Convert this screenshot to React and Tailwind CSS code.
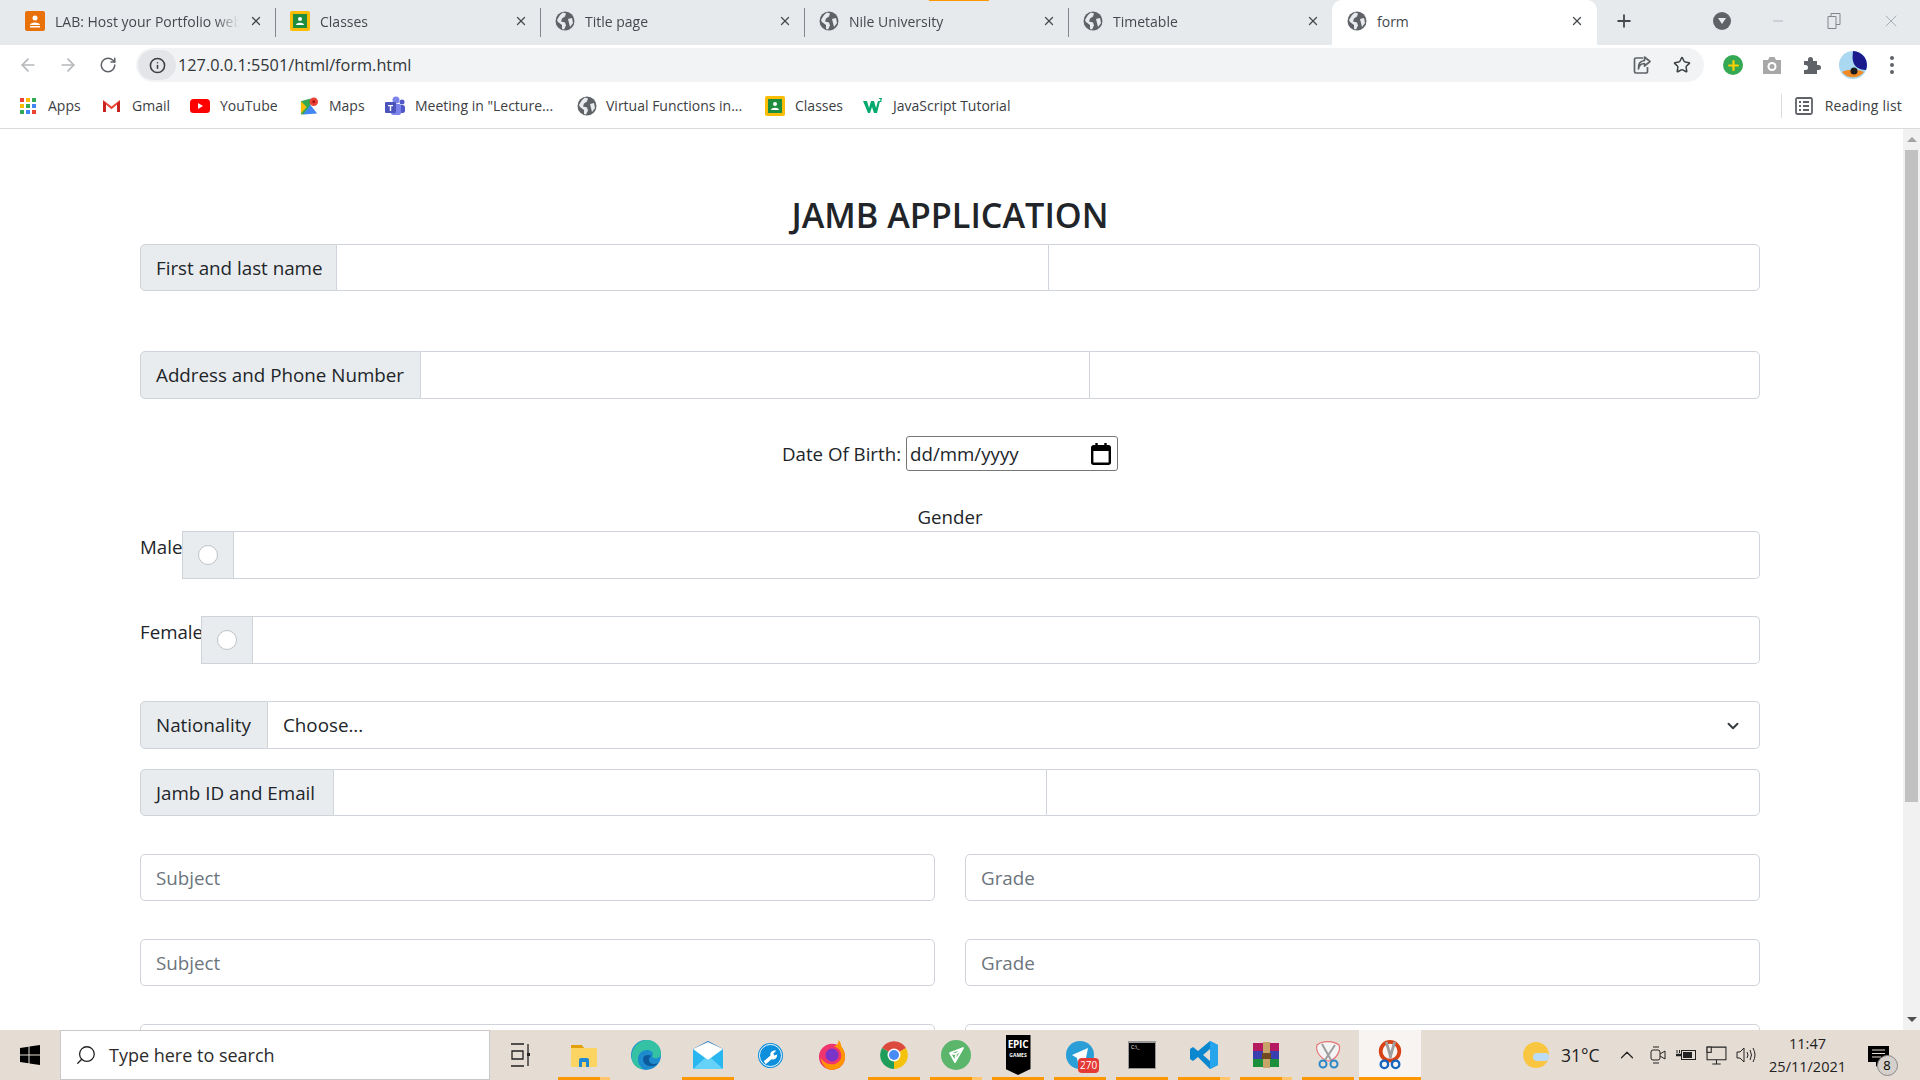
import { ArrowLeft, ArrowRight, RotateCw, Info, Star, Plus, X, Minus, ChevronDown, ChevronUp, Search } from 'lucide-react';

const Globe = () => (
  <svg viewBox="0 0 20 20" className="w-[20px] h-[20px] shrink-0">
    <circle cx="10" cy="10" r="9.5" fill="#5f6368" />
    <path d="M8 1.500l3 1-1 3-3 2-1 3 4 1 1 3-2 4-2-.5 0-4-4-3-1-2 3-5zM13 8l4-1 1 5-3 4-1-4z" fill="#e8eaed" />
  </svg>
);

const Classroom = () => (
  <svg viewBox="0 0 20 20" className="w-[20px] h-[20px] shrink-0">
    <rect width="20" height="20" rx="2" fill="#fbbc04" />
    <rect x="3" y="3" width="14" height="14" fill="#1e8e3e" />
    <circle cx="10" cy="8" r="2" fill="#fff" />
    <path d="M6 14c0-3 8-3 8 0z" fill="#fff" />
  </svg>
);

const LabIcon = () => (
  <svg viewBox="0 0 20 20" className="w-[20px] h-[20px] shrink-0">
    <rect width="20" height="20" rx="2" fill="#e8710a" />
    <circle cx="10" cy="7" r="2.5" fill="#fff" />
    <path d="M5 14c0-3.5 10-3.5 10 0z" fill="#fff" />
    <rect x="5" y="15" width="10" height="1.5" fill="#fff" />
  </svg>
);

const tabs = [
  { title: 'LAB: Host your Portfolio web', icon: <LabIcon />, w: 'w-[264px] pl-[13px] border-r' },
  { title: 'Classes', icon: <Classroom />, w: 'w-[265px] pl-[14px] border-r' },
  { title: 'Title page', icon: <Globe />, w: 'w-[264px] pl-[14px] border-r' },
  { title: 'Nile University', icon: <Globe />, w: 'w-[264px] pl-[14px] border-r' },
  { title: 'Timetable', icon: <Globe />, w: 'w-[263px] pl-[14px]' },
];

const AppsIcon = () => (
  <svg viewBox="0 0 16 16" className="w-[16px] h-[16px]">
    {[0, 6, 12].map((x, i) => [0, 6, 12].map((y, j) => (
      <rect key={`${i}${j}`} x={x} y={y} width="4" height="4" fill={['#ea4335', '#fbbc04', '#34a853', '#4285f4'][(i + j) % 4]} />
    )))}
  </svg>
);

const GmailIcon = () => (
  <svg viewBox="0 0 20 16" className="w-[19px] h-[15px]">
    <path d="M1 15V2l9 7 9-7v13h-3V7l-6 5-6-5v8z" fill="#ea4335" />
    <path d="M1 15V3l3 3v9z" fill="#c5221f" />
    <path d="M19 15V3l-3 3v9z" fill="#c5221f" />
  </svg>
);

const YoutubeIcon = () => (
  <svg viewBox="0 0 20 14" className="w-[20px] h-[14px]">
    <rect width="20" height="14" rx="3.5" fill="#f00" />
    <path d="M8 4l5 3-5 3z" fill="#fff" />
  </svg>
);

const MapsIcon = () => (
  <svg viewBox="0 0 20 20" className="w-[19px] h-[20px]">
    <path d="M1 5l10-3v16L1 19z" fill="#34a853" />
    <path d="M3 19L11 9l7 9z" fill="#4285f4" />
    <path d="M1 5l6 6-6 7z" fill="#fbbc04" />
    <circle cx="14.5" cy="5.5" r="4.5" fill="#ea4335" />
    <circle cx="14.5" cy="5.5" r="1.5" fill="#a50e0e" />
  </svg>
);

const TeamsIcon = () => (
  <svg viewBox="0 0 20 20" className="w-[20px] h-[20px]">
    <circle cx="11" cy="4" r="3.5" fill="#7b83eb" />
    <circle cx="17" cy="6" r="2.5" fill="#5059c9" />
    <rect x="13" y="9" width="7" height="8" rx="2.5" fill="#5059c9" />
    <rect x="6" y="8" width="10" height="11" rx="2" fill="#7b83eb" />
    <rect x="0" y="6" width="11" height="11" rx="1" fill="#4b53bc" />
    <path d="M3 9h5v1.3H6.2V15H4.8v-4.7H3z" fill="#fff" />
  </svg>
);

const W3Icon = () => (
  <svg viewBox="0 0 20 16" className="w-[20px] h-[16px]">
    <path d="M0 3h4l2 7 2-7h3l2 7 2-7h2l-3 12h-3l-2-6-2 6H5z" fill="#04aa6d" />
    <path d="M16 0h3v1l-1 1c1 0 1 2-.5 2H16v-1h1.500v-.7H17v-.6l.7-.7H16z" fill="#04aa6d" />
  </svg>
);

const bookmarks = [
  { label: 'Apps', icon: <AppsIcon />, w: 'w-[82px]', gap: 'gap-[12px]' },
  { label: 'Gmail', icon: <GmailIcon />, w: 'w-[88px]', gap: 'gap-[11px]' },
  { label: 'YouTube', icon: <YoutubeIcon />, w: 'w-[110px]', gap: 'gap-[10px]' },
  { label: 'Maps', icon: <MapsIcon />, w: 'w-[85px]', gap: 'gap-[10px]' },
  { label: 'Meeting in "Lecture...', icon: <TeamsIcon />, w: 'w-[192px]', gap: 'gap-[10px]' },
  { label: 'Virtual Functions in...', icon: <Globe />, w: 'w-[188px]', gap: 'gap-[9px]' },
  { label: 'Classes', icon: <Classroom />, w: 'w-[98px]', gap: 'gap-[10px]' },
  { label: 'JavaScript Tutorial', icon: <W3Icon />, w: 'w-[160px]', gap: 'gap-[10px]' },
];

function Tabs() {
  return (
    <div className="relative h-[45px] bg-[#e7eaed] flex items-end pl-[12px] shrink-0">
      <div className="absolute top-0 left-[929px] w-[60px] h-[1px] bg-[#ff9800]" />
      {tabs.map((t) => (
        <div key={t.title} className={`${t.w} h-[45px] pb-[3px] flex items-center gap-[10px] pr-[12px] border-[#9aa0a6] [border-image:linear-gradient(transparent_20%,#80868b_20%,#80868b_80%,transparent_80%)_1] text-[#45494d]`}>
          {t.icon}
          <span className="flex-1 text-[14px] whitespace-nowrap overflow-hidden [mask-image:linear-gradient(to_left,transparent,black_24px)]">{t.title}</span>
          <X className="w-[14px] h-[14px] shrink-0" strokeWidth={2.2} />
        </div>
      ))}
      <div className="w-[265px] h-[45px] pb-[3px] bg-white rounded-t-[10px] flex items-center gap-[10px] pl-[15px] pr-[13px] text-[#45494d]">
        <Globe />
        <span className="flex-1 text-[14px]">form</span>
        <X className="w-[14px] h-[14px]" strokeWidth={2.2} />
      </div>
      <div className="flex-1 h-[45px] pb-[3px] flex items-center">
        <Plus className="ml-[17px] w-[20px] h-[20px] text-[#45494d]" strokeWidth={2.2} />
        <div className="ml-[79px] w-[18px] h-[18px] rounded-full bg-[#5f6368] flex items-center justify-center">
          <div className="w-0 h-0 border-l-[4px] border-r-[4px] border-t-[6px] border-l-transparent border-r-transparent border-t-[#e8eaed]" />
        </div>
        <Minus className="ml-[39px] w-[16px] h-[16px] text-[#9aa0a6]" strokeWidth={1} />
        <svg viewBox="0 0 14 16" className="ml-[41px] w-[14px] h-[16px]" fill="none" stroke="#80868b" strokeWidth="1"><path d="M1 3.500h8v12H1zM4 3.500V.5h9v11h-4" /></svg>
        <X className="ml-[40px] w-[20px] h-[20px] text-[#9aa0a6]" strokeWidth={1} />
      </div>
    </div>
  );
}

function Toolbar() {
  return (
    <div className="h-[40px] bg-white flex items-center pl-[18px] shrink-0">
      <ArrowLeft className="w-[20px] h-[20px] text-[#b4b7bb]" strokeWidth={2} />
      <ArrowRight className="ml-[20px] w-[20px] h-[20px] text-[#b4b7bb]" strokeWidth={2} />
      <RotateCw className="ml-[21px] w-[18px] h-[18px] text-[#5f6368]" strokeWidth={2} />
      <div className="ml-[19px] w-[1568px] h-[34px] rounded-full bg-[#f1f3f4] flex items-center">
        <div className="ml-[2px] w-[38px] h-[30px] rounded-full bg-[#e3e5e8] flex items-center justify-center">
          <Info className="w-[17px] h-[17px] text-[#3c4043]" strokeWidth={2.2} />
        </div>
        <span className="ml-[2px] text-[16.3px] text-[#33363a]">127.0.0.1:5501/html/form.html</span>
        <svg viewBox="0 0 20 20" className="ml-auto w-[20px] h-[20px]" fill="none" stroke="#5f6368" strokeWidth="1.700">
          <path d="M11 3H4a1.500 1.500 0 0 0-1.500 1.500v12A1.500 1.500 0 0 0 4 18h10a1.500 1.500 0 0 0 1.500-1.500V12" />
          <path d="M12.500 2l5.500 4.500-5.500 4.500V8.500C9 8.500 7 10.500 6.500 14c-.5-5 2-8 6-8.500z" strokeLinejoin="round" />
        </svg>
        <Star className="ml-[21px] mr-[13px] w-[18px] h-[18px] text-[#3c4043]" strokeWidth={2} />
      </div>
      <div className="ml-[19px] w-[20px] h-[20px] rounded-full bg-[#34a853] flex items-center justify-center">
        <Plus className="w-[15px] h-[15px] text-[#fbd000]" strokeWidth={3.5} />
      </div>
      <svg viewBox="0 0 20 20" className="ml-[19px] w-[20px] h-[20px]">
        <path d="M1 5h5l1.500-3h5L14 5h5v14H1z" fill="#a8a8a8" />
        <circle cx="10" cy="11.500" r="4.500" fill="#fff" />
        <circle cx="10" cy="11.500" r="2.500" fill="#a8a8a8" />
      </svg>
      <svg viewBox="0 0 20 20" className="ml-[20px] w-[20px] h-[20px]">
        <path d="M2 6h4V4.500a2.500 2.500 0 0 1 5 0V6h4v4h1.500a2.500 2.500 0 0 1 0 5H15v4H2v-4h1.500a2.500 2.500 0 0 0 0-5H2z" fill="#5f6368" />
      </svg>
      <svg viewBox="0 0 28 28" className="ml-[17px] w-[28px] h-[28px] shrink-0">
        <circle cx="14" cy="14" r="14" fill="#a9d8f0" />
        <path d="M14 0a14 14 0 0 1 13 19c-6 0-12-3-13-9-1-4 0-7 0-10z" fill="#1a1a8c" />
        <path d="M3 21c5-3 16-3 22 0a14 14 0 0 1-22 0z" fill="#f08a24" />
        <circle cx="15" cy="20" r="3.500" fill="#1c1c1c" />
      </svg>
      <div className="ml-[23px] flex flex-col gap-[3px]">
        <div className="w-[4px] h-[4px] rounded-full bg-[#5f6368]" />
        <div className="w-[4px] h-[4px] rounded-full bg-[#5f6368]" />
        <div className="w-[4px] h-[4px] rounded-full bg-[#5f6368]" />
      </div>
    </div>
  );
}

function Bookmarks() {
  return (
    <div className="h-[44px] pb-[2px] bg-white flex items-center pl-[20px] border-b border-[#dadce0] shrink-0 text-[14px] text-[#3c4043]">
      {bookmarks.map((b) => (
        <div key={b.label} className={`${b.w} ${b.gap} flex items-center shrink-0 whitespace-nowrap`}>
          {b.icon}
          <span>{b.label}</span>
        </div>
      ))}
      <div className="ml-auto h-[24px] border-l border-[#dadce0] pl-[13px] pr-[18px] flex items-center gap-[12px]">
        <svg viewBox="0 0 18 18" className="w-[18px] h-[18px]" fill="none" stroke="#5f6368" strokeWidth="1.800">
          <rect x="1" y="1" width="16" height="16" rx="1.500" />
          <path d="M4 5h2M8 5h6M4 9h2M8 9h6M4 13h2M8 13h6" />
        </svg>
        <span className="tracking-[0.2px]">Reading list</span>
      </div>
    </div>
  );
}

const Field = ({ className = '' }) => (
  <input className={`min-w-0 flex-1 h-full bg-white border border-[#ced4da] outline-none ${className}`} />
);

function InputGroup({ label, labelW, split, className = '' }) {
  return (
    <div className={`flex ${className}`}>
      <div className={`${labelW} shrink-0 h-full flex items-center pl-[15px] pt-[1px] bg-[#e9ecef] border border-[#ced4da] rounded-l-[5px] text-[18.8px] text-[#212529]`}>{label}</div>
      <input className={`${split} shrink-0 h-full bg-white border-y border-[#ced4da] outline-none`} />
      <Field className="rounded-r-[5px]" />
    </div>
  );
}

function RadioRow({ label, labelW, className = '' }) {
  return (
    <div className={`flex h-[48px] ${className}`}>
      <span className={`${labelW} shrink-0 h-[32px] text-[18.7px] leading-[32px] text-[#212529]`}>{label}</span>
      <div className="w-[52px] shrink-0 h-full bg-[#e9ecef] border border-[#ced4da] flex items-center justify-center">
        <div className="w-[20px] h-[20px] rounded-full bg-white border border-[#bfc3c7]" />
      </div>
      <Field className="border-l-0 rounded-r-[5px]" />
    </div>
  );
}

function SubjectRow({ className = '' }) {
  return (
    <div className={`grid grid-cols-2 gap-[30px] ${className}`}>
      <input placeholder="Subject" className="h-[47px] px-[15px] bg-white border border-[#ced4da] rounded-[5px] text-[18.8px] outline-none placeholder:text-[#6c757d]" />
      <input placeholder="Grade" className="h-[47px] px-[15px] bg-white border border-[#ced4da] rounded-[5px] text-[18.8px] outline-none placeholder:text-[#6c757d]" />
    </div>
  );
}

function Form() {
  return (
    <div className="flex-1 min-w-0 pl-[140px] pr-[143px]">
      <h1 className="mt-[58px] h-[57px] leading-[55px] text-center text-[34.2px] font-semibold text-[#212529]">JAMB APPLICATION</h1>
      <InputGroup label="First and last name" labelW="w-[197px]" split="w-[711px]" className="h-[47px]" />
      <InputGroup label="Address and Phone Number" labelW="w-[281px]" split="w-[668px]" className="mt-[60px] h-[48px]" />
      <div className="mt-[37px] flex items-center justify-center h-[35px] text-[18.7px] text-[#212529]">
        <span className="pt-[2px]">Date Of Birth:</span>
        <div className="ml-[5px] w-[212px] h-[35px] flex items-center justify-between pl-[3px] pr-[6px] border border-[#767676] rounded-[3px] bg-white">
          <span className="pt-[2px]">dd/mm/yyyy</span>
          <svg viewBox="0 0 20 22" className="w-[20px] h-[22px]" fill="none" stroke="#000" strokeWidth="2.400">
            <rect x="1.200" y="3.200" width="17.600" height="17.600" rx="1.500" />
            <path d="M1.200 6h17.600" strokeWidth="4" />
            <path d="M5.500 0v3M14.500 0v3" />
          </svg>
        </div>
      </div>
      <div className="mt-[30px] h-[30px] leading-[31px] text-center text-[18.7px] text-[#212529]">Gender</div>
      <RadioRow label="Male" labelW="w-[42px]" />
      <RadioRow label="Female" labelW="w-[61px]" className="mt-[37px]" />
      <div className="mt-[37px] flex h-[48px]">
        <div className="w-[128px] shrink-0 flex items-center pl-[15px] pt-[1px] bg-[#e9ecef] border border-[#ced4da] rounded-l-[5px] text-[18.8px] text-[#212529]">Nationality</div>
        <div className="flex-1 flex items-center justify-between pl-[15px] pr-[17px] pt-[1px] border border-l-0 border-[#ced4da] rounded-r-[5px] text-[18.8px] text-[#212529]">
          <span>Choose...</span>
          <ChevronDown className="w-[18px] h-[18px] text-[#343a40]" strokeWidth={2.5} />
        </div>
      </div>
      <InputGroup label="Jamb ID and Email" labelW="w-[194px]" split="w-[712px]" className="mt-[20px] h-[47px]" />
      <SubjectRow className="mt-[38px]" />
      <SubjectRow className="mt-[38px]" />
      <SubjectRow className="mt-[38px]" />
    </div>
  );
}

function Scrollbar() {
  return (
    <div className="w-[17px] shrink-0 bg-[#f1f1f1] flex flex-col items-center">
      <div className="h-[21px] flex items-center justify-center">
        <div className="w-0 h-0 border-l-[5px] border-r-[5px] border-b-[5px] border-l-transparent border-r-transparent border-b-[#a3a3a3]" />
      </div>
      <div className="w-[13px] h-[652px] bg-[#c1c1c1]" />
      <div className="flex-1" />
      <div className="h-[21px] flex items-center justify-center">
        <div className="w-0 h-0 border-l-[5px] border-r-[5px] border-t-[5px] border-l-transparent border-r-transparent border-t-[#505050]" />
      </div>
    </div>
  );
}

const taskIcons = [
  { bar: 'part', icon: (
    <svg viewBox="0 0 28 28" className="w-[28px] h-[28px]"><path d="M1 4h11l2 3H1z" fill="#e3a008" /><rect x="1" y="7" width="26" height="19" rx="1" fill="#fcd462" /><path d="M9 26v-7q0-2 2-2h6q2 0 2 2v7h-3v-5h-4v5z" fill="#1e88d2" /></svg>
  ) },
  { bar: 'none', icon: (
    <svg viewBox="0 0 30 30" className="w-[30px] h-[30px]"><circle cx="15" cy="15" r="15" fill="#1d8ccf" /><path d="M1 13C3 4 10 0 16 0c8 0 14 6 14 13 0 6-8 7-9 3 2-1 1-6-5-6-5 0-9 4-9 9 0 3 1 7 5 10C5 29-1 22 1 13z" fill="#35c1a4" /><path d="M12 19c0 5 5 8 10 7 2 0 4-1 5-3-4 2-9 1-9-3 0-4 3-4 3-4-4-2-9-1-9 3z" fill="#0c5a9c" /></svg>
  ) },
  { bar: 'full', icon: (
    <svg viewBox="0 0 32 30" className="w-[32px] h-[30px]"><path d="M1 9L16 1l15 8v20H1z" fill="#0e6fb8" /><rect x="1" y="9" width="30" height="20" fill="#2ab6ee" /><path d="M1 9l15 11L31 9 16 2z" fill="#fff" /><path d="M1 29l12-11 3 2 3-2 12 11z" fill="#65d2f7" /></svg>
  ) },
  { bar: 'none', icon: (
    <svg viewBox="0 0 26 26" className="w-[25px] h-[25px]"><circle cx="13" cy="13" r="13" fill="#0d8fdb" /><circle cx="13" cy="13" r="11.500" fill="none" stroke="#fff" strokeWidth="1" /><path d="M6 19l7-6c-1-3 2-6 6-5l-3 3 1 2 3-1c0 4-3 6-6 5l-6 5z" fill="#fff" /></svg>
  ) },
  { bar: 'none', icon: (
    <svg viewBox="0 0 30 32" className="w-[28px] h-[30px]"><circle cx="15" cy="18" r="14" fill="#f0356e" /><path d="M15 32a14 14 0 0 0 14-14c0-5-2-9-4-11 0-3-2-6-3-7 0 4-2 6-5 7 5 1 8 5 8 10s-5 9-10 9C8 26 5 22 3 19c1 8 6 13 12 13z" fill="#ff9500" /><circle cx="15" cy="16" r="7" fill="#7a35c8" /></svg>
  ) },
  { bar: 'full', icon: (
    <svg viewBox="0 0 28 28" className="w-[28px] h-[28px]"><path d="M14 14L2 7a14 14 0 0 1 24 0z" fill="#dc4a3d" /><path d="M14 14l12-7a14 14 0 0 1-12 21z" fill="#f4c20d" /><path d="M14 14v14A14 14 0 0 1 2 7z" fill="#1e9e5a" /><circle cx="14" cy="14" r="6.500" fill="#fff" /><circle cx="14" cy="14" r="5" fill="#4a8af4" /></svg>
  ) },
  { bar: 'part', icon: (
    <svg viewBox="0 0 30 30" className="w-[30px] h-[30px]"><circle cx="15" cy="15" r="15" fill="#5bb56b" /><path d="M22 8L9 13l5 9zM9 13l6 1 7-6M15 14l-1 8" fill="none" stroke="#fff" strokeWidth="1.800" strokeLinejoin="round" /></svg>
  ) },
  { bar: 'full', icon: (
    <div className="w-[25px] h-[40px] bg-black [clip-path:polygon(0_0,100%_0,100%_85%,50%_100%,0_85%)] flex flex-col items-center pt-[4px] text-white font-bold leading-none">
      <span className="text-[10px] tracking-tight">EPIC</span>
      <span className="text-[5px] mt-[4px]">GAMES</span>
    </div>
  ) },
  { bar: 'full', icon: (
    <div className="relative w-[28px] h-[28px]">
      <svg viewBox="0 0 28 28" className="w-[28px] h-[28px]"><circle cx="14" cy="14" r="14" fill="#2a9ed6" /><path d="M6 14l16-7-3 15-5-3-2 3-1-5z" fill="#fff" /></svg>
      <span className="absolute top-[17px] left-[12px] px-[2px] rounded-[4px] bg-[#e53935] text-white text-[10px] leading-[15px]">270</span>
    </div>
  ) },
  { bar: 'full', icon: (
    <div className="w-[28px] h-[28px] bg-black border-t-[2px] border-x border-b border-[#999] pl-[2px] text-white text-[5px] leading-[8px]">C:\_</div>
  ) },
  { bar: 'part', icon: (
    <svg viewBox="0 0 30 30" className="w-[30px] h-[30px]"><path d="M21 1l8 4v20l-8 4-12-12-5 4-3-2v-10l3-2 5 4zM21 9l-7 6 7 6z" fill="#0b87d0" /><path d="M21 1l8 4v20l-8 4z" fill="#26a5ec" /></svg>
  ) },
  { bar: 'part', icon: (
    <svg viewBox="0 0 28 28" className="w-[28px] h-[28px]"><rect x="1" y="2" width="26" height="8" fill="#b5195f" /><rect x="1" y="10" width="26" height="8" fill="#3840b0" /><rect x="1" y="18" width="26" height="8" fill="#1c8f3c" /><rect x="11" y="1" width="7" height="26" fill="#c9a46a" /><rect x="10" y="12" width="9" height="6" fill="#6e4a1e" /></svg>
  ) },
  { bar: 'full', icon: (
    <svg viewBox="0 0 28 30" className="w-[28px] h-[30px]" fill="none"><path d="M3 5c6-5 17-4 22 0 2 5-2 14-10 16C8 20 1 12 3 5z" stroke="#e57373" strokeWidth="1.200" fill="#f4f4f4" /><path d="M8 4l9 16M21 5L11 20" stroke="#9e9e9e" strokeWidth="2" /><circle cx="9" cy="24" r="3.500" stroke="#2a88c8" strokeWidth="2" /><circle cx="20" cy="24" r="3.500" stroke="#2a88c8" strokeWidth="2" /></svg>
  ) },
  { bar: 'full', active: true, icon: (
    <svg viewBox="0 0 30 32" className="w-[28px] h-[30px]" fill="none"><circle cx="15" cy="12" r="10" stroke="#d84315" strokeWidth="4" /><path d="M11 2l5 17M20 2l-5 17" stroke="#9e9e9e" strokeWidth="3" /><circle cx="9" cy="26" r="4" stroke="#1565c0" strokeWidth="2.500" /><circle cx="21" cy="26" r="4" stroke="#1565c0" strokeWidth="2.500" /></svg>
  ) },
];

function Taskbar() {
  return (
    <div className="h-[50px] bg-[#e5dcd4] flex items-stretch shrink-0">
      <div className="w-[60px] flex items-center justify-center">
        <svg viewBox="0 0 20 20" className="w-[20px] h-[20px]"><path d="M0 3l8.500-1.300v7.800H0zM9.500 1.500L20 0v9.500H9.500zM0 10.500h8.500v7.800L0 17zM9.500 10.500H20V20L9.500 18.500z" fill="#000" /></svg>
      </div>
      <div className="w-[430px] bg-white border border-[#c9c9c9] flex items-center pl-[14px] gap-[12px] text-[18px] text-[#2b2b2b]">
        <Search className="w-[22px] h-[22px] -scale-x-100 text-[#222]" strokeWidth={1.4} />
        <span>Type here to search</span>
      </div>
      <div className="w-[63px] pr-[3px] flex items-center justify-center">
        <svg viewBox="0 0 20 24" className="w-[20px] h-[24px]" fill="none" stroke="#222" strokeWidth="1.300"><path d="M1 1h13M1 23h13M2 8h11v8H2zM18 1v22" /><rect x="17" y="10" width="3" height="3" fill="#222" stroke="none" /></svg>
      </div>
      <div className="flex">
        {taskIcons.map((t, i) => (
          <div key={i} className={`relative w-[62px] flex items-center justify-center ${t.active ? 'bg-[#f7f4f2]' : ''}`}>
            {t.icon}
            {t.bar === 'full' && <div className="absolute bottom-0 left-[5px] right-[5px] h-[3px] bg-[#ff9800]" />}
            {t.active && <div className="absolute bottom-0 left-0 right-0 h-[3px] bg-[#ff9800]" />}
            {t.bar === 'part' && <div className="absolute bottom-0 left-[5px] right-[15px] h-[3px] bg-[#ff9800]" />}
            {t.bar === 'part' && <div className="absolute bottom-0 right-[5px] w-[10px] h-[3px] bg-[#ffc46e]" />}
          </div>
        ))}
      </div>
      <div className="flex-1 flex items-center text-[#222]">
        <div className="ml-[102px] w-[26px] h-[26px] rounded-full bg-[#f9c642] relative shrink-0">
          <div className="absolute left-[10px] top-[11px] w-[16px] h-[8px] rounded-full bg-[#bcdcf5]" />
        </div>
        <span className="ml-[12px] text-[17.5px] whitespace-nowrap">31°C</span>
        <ChevronUp className="ml-[16px] w-[22px] h-[22px]" strokeWidth={1.3} />
        <svg viewBox="0 0 16 20" className="ml-[12px] w-[16px] h-[20px]" fill="none" stroke="#222" strokeWidth="1"><rect x="1" y="5" width="9" height="10" rx="2" /><path d="M10 9l5-3v8l-5-3M3 2h6M3 18h6" /></svg>
        <svg viewBox="0 0 20 14" className="ml-[10px] w-[20px] h-[14px]" fill="none" stroke="#222" strokeWidth="1"><rect x="5.500" y="2.500" width="14" height="9" /><rect x="7" y="4" width="9" height="6" fill="#222" stroke="none" /><path d="M0 7h5" strokeWidth="2.500" /><path d="M1 2v3M3.500 2v3" /></svg>
        <svg viewBox="0 0 20 18" className="ml-[10px] w-[21px] h-[19px]" fill="none" stroke="#222" strokeWidth="1"><path d="M1 1h18v12H1zM6 17h8M10 13v4" /><rect x="1" y="1" width="4" height="5" fill="#e5dcd4" /></svg>
        <svg viewBox="0 0 20 18" className="ml-[9px] w-[20px] h-[18px]" fill="none" stroke="#222" strokeWidth="1"><path d="M1 6h3l4-4v14l-4-4H1zM11 6q2 3 0 6M14 4q3 5 0 10M17 2q4 7 0 14" /></svg>
        <div className="ml-[7px] w-[90px] text-center text-[14.5px] leading-[23px] whitespace-nowrap">
          <div>11:47</div>
          <div>25/11/2021</div>
        </div>
        <div className="relative ml-[15px] w-[21px] h-[18px] shrink-0">
          <svg viewBox="0 0 21 22" className="w-[21px] h-[22px]"><path d="M0 0h21v16h-9l-4 5v-5H0z" fill="#000" /><path d="M4 4h13M4 7.500h13M4 11h9" stroke="#e5dcd4" strokeWidth="1" /></svg>
          <span className="absolute top-[9px] left-[9px] w-[21px] h-[21px] rounded-full bg-[#d5d0cb] border border-[#888] text-[13px] leading-[19px] text-center text-black">8</span>
        </div>
      </div>
    </div>
  );
}

export default function App() {
  return (
    <div className="w-[1920px] h-[1080px] flex flex-col overflow-hidden bg-white font-['Open_Sans','Noto_Sans',sans-serif]">
      <Tabs />
      <Toolbar />
      <Bookmarks />
      <div className="flex-1 min-h-0 flex overflow-hidden">
        <Form />
        <Scrollbar />
      </div>
      <Taskbar />
    </div>
  );
}
